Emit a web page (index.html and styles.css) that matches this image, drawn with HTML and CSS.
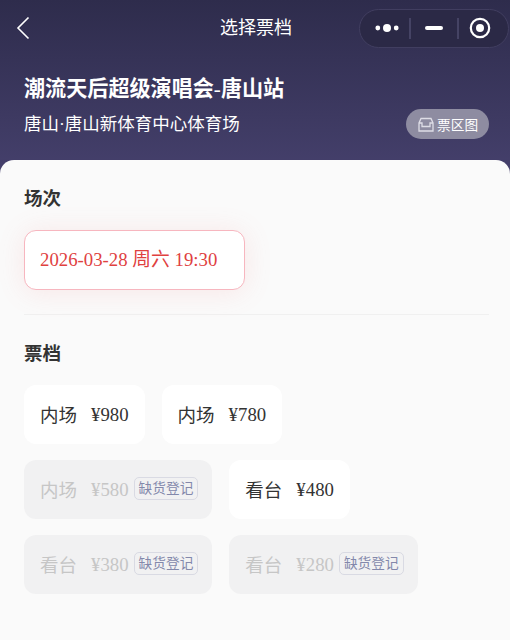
FILE: index.html
```html
<!DOCTYPE html>
<html lang="zh-CN">
<head>
<meta charset="utf-8">
<title>选择票档</title>
<link rel="stylesheet" href="styles.css">
</head>
<body>
<div class="page">
  <header class="hero">
    <nav class="nav">
      <button class="back" aria-label="返回">
        <svg width="14" height="24" viewBox="0 0 14 24"><path d="M12.500 1.500 2 12l10.500 10.500" fill="none" stroke="#fff" stroke-width="1.600"/></svg>
      </button>
      <h1 class="nav-title">选择票档</h1>
      <div class="capsule">
        <svg class="cap-more" width="24" height="10" viewBox="0 0 24 10"><circle cx="2.800" cy="5" r="2.400" fill="#fff"/><circle cx="12" cy="5" r="4" fill="#fff"/><circle cx="21.200" cy="5" r="2.400" fill="#fff"/></svg>
        <span class="cap-sep"></span>
        <span class="cap-min"></span>
        <span class="cap-sep"></span>
        <svg class="cap-close" width="22" height="22" viewBox="0 0 22 22"><circle cx="11" cy="11" r="9.200" fill="none" stroke="#fff" stroke-width="2.200"/><circle cx="11" cy="11" r="4" fill="#fff"/></svg>
      </div>
    </nav>
    <div class="event">
      <h2 class="event-name">潮流天后超级演唱会<span class="event-dash">-</span>唐山站</h2>
      <div class="event-row">
        <p class="event-venue">唐山·唐山新体育中心体育场</p>
        <button class="map-btn">
          <svg width="16" height="15" viewBox="0 0 16 15"><path d="M1 14V6L3 1.500H13L15 6V14ZM1 6H4V9.500H12V6H15" fill="none" stroke="#dedde6" stroke-width="1.300"/></svg>
          <span>票区图</span>
        </button>
      </div>
    </div>
  </header>
  <main class="panel">
    <section class="sessions">
      <h3 class="section-title">场次</h3>
      <div class="session-card">2026-03-28 周六 19:30</div>
    </section>
    <section class="tickets">
      <h3 class="section-title">票档</h3>
      <div class="ticket-grid">
        <div class="ticket"><span class="t-name">内场</span><span class="t-price">¥980</span></div>
        <div class="ticket"><span class="t-name">内场</span><span class="t-price">¥780</span></div>
        <div class="ticket off"><span class="t-name">内场</span><span class="t-price">¥580</span><span class="t-tag">缺货登记</span></div>
        <div class="ticket"><span class="t-name">看台</span><span class="t-price">¥480</span></div>
        <div class="ticket off"><span class="t-name">看台</span><span class="t-price">¥380</span><span class="t-tag">缺货登记</span></div>
        <div class="ticket off"><span class="t-name">看台</span><span class="t-price">¥280</span><span class="t-tag">缺货登记</span></div>
      </div>
    </section>
  </main>
</div>
</body>
</html>
```
FILE: styles.css
```css
* { box-sizing: border-box; }
html, body { margin: 0; padding: 0; }
body {
  width: 510px;
  height: 640px;
  overflow: hidden;
  font-family: "Liberation Serif", "Noto Sans CJK SC", serif;
  background: #fafafa;
}
.page { display: flex; flex-direction: column; height: 640px; }
.hero {
  height: 174px;
  flex: none;
  padding: 8px 1px 0 0;
  background: linear-gradient(180deg, #2e2c4c 0%, #45406c 100%);
  color: #fff;
}
.nav { display: flex; align-items: center; height: 40px; }
.back {
  flex: none;
  width: 48px;
  height: 40px;
  margin: 0;
  padding: 0 0 0 16px;
  border: 0;
  background: none;
  display: flex;
  align-items: center;
}
.nav-title {
  flex: 1;
  margin: 0 0 0 -48px;
  padding-left: 220px;
  font-size: 18px;
  font-weight: 400;
  line-height: 40px;
  white-space: nowrap;
  color: #fff;
}
.capsule {
  flex: none;
  width: 150px;
  height: 39px;
  margin-left: -150px;
  border: 1px solid #413e60;
  border-radius: 20px;
  background: #2b2946;
  display: flex;
  align-items: center;
  padding-left: 15px;
}
.cap-more { flex: none; }
.cap-sep { flex: none; width: 2px; height: 21px; background: #454364; margin-left: 10px; }
.cap-min { flex: none; width: 18px; height: 4px; border-radius: 2px; background: #fff; margin-left: 14px; margin-right: 14px; }
.cap-min + .cap-sep { margin-left: 0; }
.cap-close { flex: none; margin-left: 10px; }
.event { padding: 25px 20px 0 24px; }
.event-name {
  margin: 0;
  font-size: 21.100px;
  font-weight: 700;
  line-height: 32px;
  white-space: nowrap;
}
.event-dash { font-weight: 400; }
.event-row { display: flex; align-items: center; justify-content: space-between; margin-top: 4px; }
.event-venue { margin: 0; font-size: 17.500px; line-height: 30px; white-space: nowrap; }
.map-btn {
  display: flex;
  align-items: center;
  gap: 3px;
  width: 83px;
  height: 30px;
  padding: 0 0 0 12px;
  border: 0;
  border-radius: 15px;
  background: #8e8ca1;
  color: #fff;
  font-family: "Noto Sans CJK SC", sans-serif;
  font-size: 13.700px;
  white-space: nowrap;
}
.panel {
  flex: 1;
  margin-top: -14px;
  padding: 0 21px 0 24px;
  border-radius: 14px 14px 0 0;
  background: #fafafa;
}
.sessions { padding: 23px 0 24px; border-bottom: 1px solid #f0f0f0; }
.section-title {
  margin: 0;
  font-family: "Noto Sans CJK SC", sans-serif;
  font-size: 18.500px;
  font-weight: 700;
  line-height: 28px;
  color: #333;
}
.session-card {
  width: 221px;
  height: 60px;
  margin-top: 19px;
  padding-left: 15px;
  border: 1px solid #f7b6bf;
  border-radius: 12px;
  background: #fff;
  box-shadow: 0 2px 28px rgba(240, 110, 110, 0.14);
  color: #e0413f;
  font-size: 18.800px;
  line-height: 58px;
  white-space: nowrap;
}
.tickets { padding-top: 23px; }
.ticket-grid { display: flex; flex-wrap: wrap; gap: 16px 17px; width: 450px; margin-top: 19px; }
.ticket {
  display: flex;
  align-items: center;
  height: 59px;
  padding: 0 16px;
  border-radius: 12px;
  background: #fff;
  color: #333;
  font-size: 18.800px;
}
.t-name { font-size: 18.500px; margin-bottom: 2px; }
.t-price { margin-left: 14px; }
.off { background: #f1f1f2; color: #c6c6c6; padding-right: 14px; }
.t-tag {
  margin-left: 5px;
  margin-bottom: 2px;
  padding: 0 4px;
  height: 23px;
  border: 1px solid #d9dae3;
  border-radius: 5px;
  color: #8388ab;
  font-family: "Noto Sans CJK SC", sans-serif;
  font-size: 13.700px;
  line-height: 19px;
  white-space: nowrap;
}
```
